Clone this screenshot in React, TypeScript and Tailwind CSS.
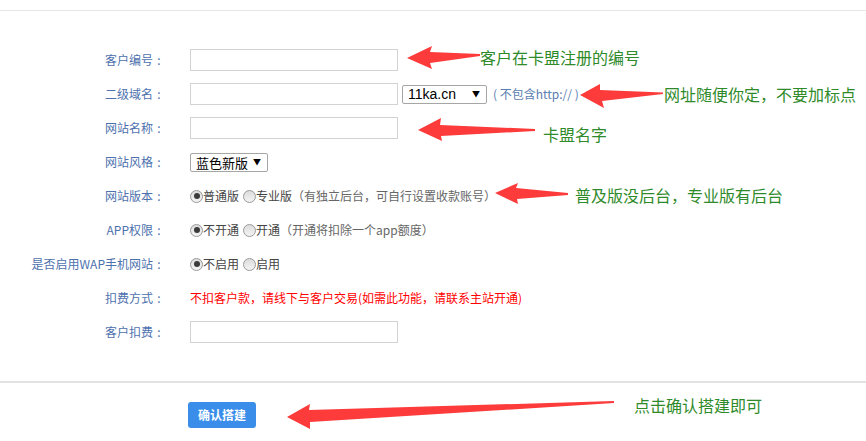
import React from "react";

const FONT = { fontFamily: '"Noto Sans CJK SC", "Noto Sans", sans-serif' };

function Label({ children }: { children: React.ReactNode }) {
  return (
    <div className="flex w-[165px] shrink-0 items-center justify-end text-[12px] leading-none text-[#4d71ad]">
      <span>{children}</span>
      <span className="inline-block w-[12px] text-center">:</span>
    </div>
  );
}

function Row({ label, children }: { label: React.ReactNode; children?: React.ReactNode }) {
  return (
    <div className="flex h-[34px] items-center">
      <Label>{label}</Label>
      <div className="ml-[25px] flex items-center">{children}</div>
    </div>
  );
}

function TextInput() {
  return <div className="h-[22px] w-[208px] border border-[#d3d3d3] bg-white" />;
}

function Radio({ checked }: { checked?: boolean }) {
  return (
    <span className="flex h-[13px] w-[13px] items-center justify-center rounded-full border border-[#9a9a9a] bg-gradient-to-b from-[#dcdcdc] to-[#f4f4f4]">
      {checked && <span className="h-[6px] w-[6px] rounded-full bg-[#3a3a3a]" />}
    </span>
  );
}

function FakeSelect({ text, width, textClass }: { text: string; width: string; textClass: string }) {
  return (
    <div
      className={`flex h-[19px] items-center justify-between rounded-[2px] border border-[#a6a6a6] bg-white pl-[5px] pr-[6px] ${width}`}
    >
      <span className={`font-normal leading-none text-black ${textClass}`}>{text}</span>
      <span className="text-[8px] leading-none text-black">▼</span>
    </div>
  );
}

export default function App() {
  return (
    <div className="relative h-[441px] w-[866px] overflow-hidden bg-white" style={FONT}>
      <div className="h-[11px] border-b border-[#e6e6e6]" />
      <div className="pt-[32px]">
        <Row label="客户编号">
          <TextInput />
        </Row>
        <Row label="二级域名">
          <TextInput />
          <div className="ml-[4px]">
            <FakeSelect
              text="11ka.cn"
              width="w-[85px]"
              textClass="text-[14px] [font-family:'Liberation_Sans',Arial,sans-serif]"
            />
          </div>
          <span className="ml-[6px] text-[12px] leading-none text-[#5b7db0]">( 不包含http:// )</span>
        </Row>
        <Row label="网站名称">
          <TextInput />
        </Row>
        <Row label="网站风格">
          <FakeSelect text="蓝色新版" width="w-[78px]" textClass="text-[13px]" />
        </Row>
        <Row label="网站版本">
          <div className="flex items-center text-[12px] leading-none">
            <Radio checked />
            <span className="text-[#444]">普通版</span>
            <span className="ml-[4px]" />
            <Radio />
            <span className="text-[#444]">专业版</span>
            <span className="text-[#666]">（有独立后台，可自行设置收款账号）</span>
          </div>
        </Row>
        <Row label="APP权限">
          <div className="flex items-center text-[12px] leading-none">
            <Radio checked />
            <span className="text-[#444]">不开通</span>
            <span className="ml-[4px]" />
            <Radio />
            <span className="text-[#444]">开通</span>
            <span className="text-[#666]">（开通将扣除一个app额度）</span>
          </div>
        </Row>
        <Row label="是否启用WAP手机网站">
          <div className="flex items-center text-[12px] leading-none">
            <Radio checked />
            <span className="text-[#444]">不启用</span>
            <span className="ml-[4px]" />
            <Radio />
            <span className="text-[#444]">启用</span>
          </div>
        </Row>
        <Row label="扣费方式">
          <span className="text-[12px] leading-none text-[#ff0000]">
            不扣客户款，请线下与客户交易(如需此功能，请联系主站开通)
          </span>
        </Row>
        <Row label="客户扣费">
          <TextInput />
        </Row>
      </div>
      <div className="mt-[32px] h-[2px] bg-[#e2e2e2]" />
      <div className="pl-[188px] pt-[19px]">
        <button className="flex h-[26px] w-[68px] items-center justify-center rounded-[3px] bg-[#3a8ee9] text-[12px] font-bold leading-none text-white">
          确认搭建
        </button>
      </div>

      {/* annotations */}
      <svg className="pointer-events-none absolute left-0 top-0" width="866" height="441" viewBox="0 0 866 441">
        <g fill="#fd3b3b">
          <polygon points="407,58 432,46 430,52 480,54 480,56 430,63 432,69" />
          <polygon points="580,95 600,84 600,90 663,92.5 663,94 602,101 604,108" />
          <polygon points="418,130 441,118 440,125 535,129 535,131 441,136 442,141" />
          <polygon points="495,193 518,183 516,188 568,193 568,195 517,199 518,204" />
          <polygon points="287,417 310,404 309,410 614,401 614,403 310,422 310,429" />
        </g>
      </svg>
      <span className="absolute left-[480px] top-[49px] text-[16px] leading-none text-[#2f8a2a]">客户在卡盟注册的编号</span>
      <span className="absolute left-[664px] top-[86px] text-[16px] leading-none text-[#2f8a2a]">网址随便你定，不要加标点</span>
      <span className="absolute left-[543px] top-[126px] text-[16px] leading-none text-[#2f8a2a]">卡盟名字</span>
      <span className="absolute left-[575px] top-[187px] text-[16px] leading-none text-[#2f8a2a]">普及版没后台，专业版有后台</span>
      <span className="absolute left-[634px] top-[397px] text-[16px] leading-none text-[#2f8a2a]">点击确认搭建即可</span>
    </div>
  );
}
